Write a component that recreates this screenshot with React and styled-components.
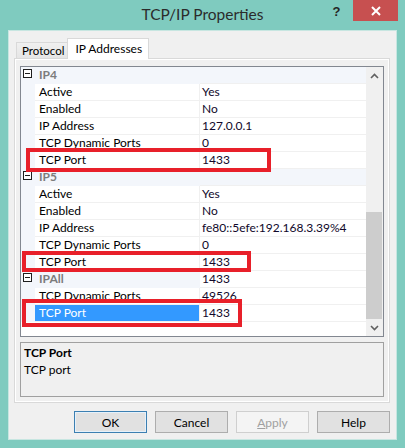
import React from "react"
import styled, { createGlobalStyle, css } from "styled-components"

const GlobalStyle = createGlobalStyle`
  html, body {
    margin: 0;
    padding: 0;
    background: #7fcbbf;
  }
  body {
    font-family: "Segoe UI", Lato, "Noto Sans", sans-serif;
    font-size: 12px;
    color: #000;
  }
`

const Window = styled.div`
  position: relative;
  width: 405px;
  height: 448px;
  background: #7fcbbf;
  overflow: hidden;
`

const TitleBar = styled.div`
  display: grid;
  grid-template-columns: 1fr auto 1fr;
  align-items: start;
  height: 30px;
`

const Title = styled.div`
  grid-column: 2;
  padding-top: 5px;
  font-size: 15.5px;
  color: #2b2b2b;
`

const Controls = styled.div`
  grid-column: 3;
  justify-self: end;
  display: flex;
  align-items: flex-start;
  margin-right: 7px;
`

const HelpGlyph = styled.div`
  width: 15px;
  padding-top: 4px;
  margin-right: 9px;
  font-family: "Liberation Sans", sans-serif;
  font-weight: bold;
  font-size: 13px;
  color: #262626;
  text-align: center;
`

const CloseButton = styled.div`
  display: flex;
  align-items: center;
  justify-content: center;
  width: 45px;
  height: 21px;
  background: #c75050;
`

const Client = styled.div`
  box-sizing: border-box;
  margin: 0 8px;
  height: 410px;
  background: #f0f0f0;
  border: 1px solid #c7e6e1;
  padding: 7px 6px 0 5px;
`

const TabStrip = styled.div`
  display: flex;
  align-items: flex-end;
  height: 20px;
  padding-left: 2px;
  position: relative;
  z-index: 1;
`

const Tab = styled.div`
  box-sizing: border-box;
  display: flex;
  align-items: center;
  flex-shrink: 0;
  white-space: nowrap;
  border: 1px solid #d9d9d9;
  border-bottom: none;
  ${p =>
    p.$active
      ? css`
          height: 21px;
          margin-bottom: -1px;
          padding: 0 6px 2px 7px;
          background: #fff;
          font-size: 12px;
        `
      : css`
          height: 16px;
          padding: 0 3px 0 5px;
          background: linear-gradient(#f0f0f0, #e5e5e5);
          border-right: none;
          font-size: 11.5px;
        `}
`

const TabPage = styled.div`
  box-sizing: border-box;
  width: 376px;
  height: 345px;
  border: 1px solid #d9d9d9;
  box-shadow: inset 1px 1px 0 #fff, inset -1px -1px 0 #fff;
  background: #f0f0f0;
  padding: 7px 5px 0 5px;
`

const List = styled.div`
  box-sizing: border-box;
  display: flex;
  height: 271px;
  border: 1px solid #828790;
  background: #fff;
`

const Rows = styled.div`
  flex: 1;
  overflow: hidden;
`

const Row = styled.div`
  box-sizing: border-box;
  display: grid;
  grid-template-columns: 14px 165px 1fr;
  height: 17px;
  line-height: 16px;
  white-space: nowrap;
`

const Indent = styled.div`
  position: relative;
  background: #f3f6fb;
`

const Expander = styled.span`
  position: absolute;
  left: 2px;
  top: 2px;
  box-sizing: border-box;
  width: 9px;
  height: 9px;
  border: 1px solid #1e1e1e;
  background: #fff;

  &::after {
    content: "";
    position: absolute;
    left: 1px;
    top: 3px;
    width: 5px;
    height: 1px;
    background: #1e1e1e;
  }
`

const GroupName = styled.div`
  background: #f3f6fb;
  padding-left: 4px;
  font-weight: bold;
  color: #7c7c7c;
`

const Name = styled.div`
  padding-left: 4px;
  border-bottom: 1px solid #f0f0f0;
  border-right: 1px solid #f0f0f0;
  overflow: hidden;
  ${p =>
    p.$selected &&
    css`
      background: #3399ff;
      color: #fff;
    `}
`

const Value = styled.div`
  padding-left: 2px;
  border-bottom: 1px solid #f0f0f0;
  background: ${p => (p.$group ? "#f3f6fb" : "#fff")};
  color: #10082a;
`

const ScrollBar = styled.div`
  display: flex;
  flex-direction: column;
  width: 17px;
  background: #f0f0f0;
`

const ScrollArrow = styled.div`
  display: flex;
  align-items: center;
  justify-content: center;
  height: 17px;
`

const ScrollTrack = styled.div`
  flex: 1;
  display: flex;
  flex-direction: column;
  justify-content: flex-end;
`

const Thumb = styled.div`
  margin: 0 1px 0 0;
  height: 107px;
  background: #cdcdcd;
`

const Description = styled.div`
  box-sizing: border-box;
  margin-top: 5px;
  height: 55px;
  border: 1px solid #a0a0a0;
  padding: 1px 3px;
  line-height: 17px;
`

const DescTitle = styled.div`
  font-weight: bold;
`

const ButtonRow = styled.div`
  display: flex;
  justify-content: flex-end;
  gap: 8px;
  margin-top: 8px;
  width: 376px;
`

const Button = styled.div`
  box-sizing: border-box;
  display: flex;
  align-items: center;
  justify-content: center;
  width: 73px;
  height: 22px;
  border: 1px solid ${p => (p.$default ? "#3c7fb1" : p.$disabled ? "#cfcfcf" : "#adadad")};
  background: ${p => (p.$disabled ? "#f4f4f4" : "#e1e1e1")};
  color: ${p => (p.$disabled ? "#a0a0a0" : "#000")};
  ${p =>
    p.$default &&
    css`
      box-shadow: inset 0 0 0 1px #e5f1fb;
    `}
`

const Marker = styled.div`
  position: absolute;
  box-sizing: border-box;
  border: 4px solid #e8202a;
  pointer-events: none;
`

const groups = [
  {
    name: "IP4",
    items: [
      ["Active", "Yes"],
      ["Enabled", "No"],
      ["IP Address", "127.0.0.1"],
      ["TCP Dynamic Ports", "0"],
      ["TCP Port", "1433"],
    ],
  },
  {
    name: "IP5",
    items: [
      ["Active", "Yes"],
      ["Enabled", "No"],
      ["IP Address", "fe80::5efe:192.168.3.39%4"],
      ["TCP Dynamic Ports", "0"],
      ["TCP Port", "1433"],
    ],
  },
  {
    name: "IPAll",
    value: "1433",
    items: [
      ["TCP Dynamic Ports", "49526"],
      ["TCP Port", "1433", true],
    ],
  },
]

const markers = [
  { left: 26, top: 148, width: 245, height: 24 },
  { left: 22, top: 251, width: 229, height: 21 },
  { left: 22, top: 299, width: 220, height: 28 },
]

const Chevron = ({ down }) => (
  <svg width="9" height="6" viewBox="0 0 9 6">
    <path
      d={down ? "M1 1 L4.5 4.5 L8 1" : "M1 5 L4.5 1.5 L8 5"}
      fill="none"
      stroke="#606060"
      strokeWidth="1.6"
    />
  </svg>
)

const App = () => (
  <>
    <GlobalStyle />
    <Window>
      <TitleBar>
        <Title>TCP/IP Properties</Title>
        <Controls>
          <HelpGlyph>?</HelpGlyph>
          <CloseButton>
            <svg width="10" height="10" viewBox="0 0 10 10">
              <path d="M1 1 L9 9 M9 1 L1 9" stroke="#fff" strokeWidth="2" />
            </svg>
          </CloseButton>
        </Controls>
      </TitleBar>
      <Client>
        <TabStrip>
          <Tab>Protocol</Tab>
          <Tab $active>IP Addresses</Tab>
        </TabStrip>
        <TabPage>
          <List>
            <Rows>
              {groups.map(g => (
                <React.Fragment key={g.name}>
                  <Row>
                    <Indent>
                      <Expander />
                    </Indent>
                    <GroupName>{g.name}</GroupName>
                    <Value $group={!g.value}>{g.value}</Value>
                  </Row>
                  {g.items.map(([label, value, selected]) => (
                    <Row key={label}>
                      <Indent />
                      <Name $selected={selected}>{label}</Name>
                      <Value>{value}</Value>
                    </Row>
                  ))}
                </React.Fragment>
              ))}
            </Rows>
            <ScrollBar>
              <ScrollArrow>
                <Chevron />
              </ScrollArrow>
              <ScrollTrack>
                <Thumb />
              </ScrollTrack>
              <ScrollArrow>
                <Chevron down />
              </ScrollArrow>
            </ScrollBar>
          </List>
          <Description>
            <DescTitle>TCP Port</DescTitle>
            <div>TCP port</div>
          </Description>
        </TabPage>
        <ButtonRow>
          <Button $default>OK</Button>
          <Button>Cancel</Button>
          <Button $disabled>
            <span>
              <u>A</u>pply
            </span>
          </Button>
          <Button>Help</Button>
        </ButtonRow>
      </Client>
      {markers.map((m, i) => (
        <Marker key={i} style={m} />
      ))}
    </Window>
  </>
)

export default App
